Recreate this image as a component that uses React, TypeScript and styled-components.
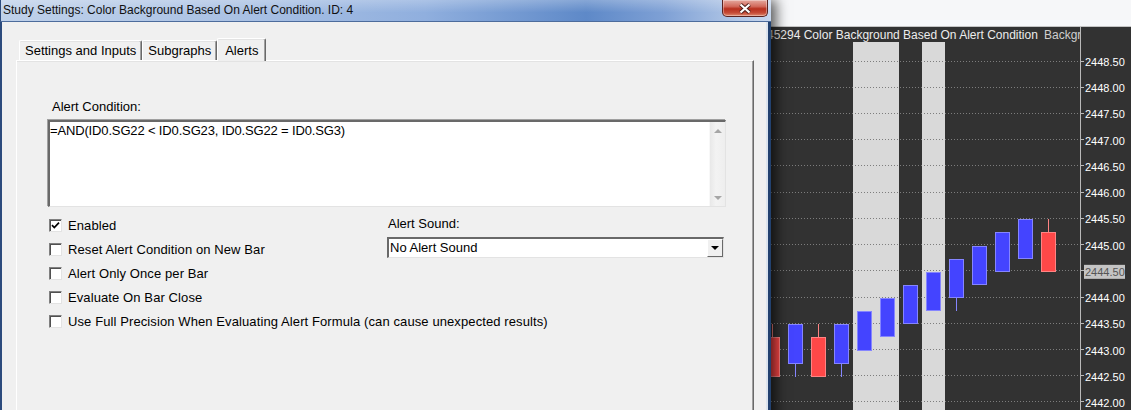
import styled, { createGlobalStyle } from "styled-components";

const GlobalStyle = createGlobalStyle`
  html, body {
    margin: 0;
    padding: 0;
    background: #323232;
  }
  body {
    font-family: "Liberation Sans", Arial, sans-serif;
  }
`;

const Desktop = styled.div`
  position: relative;
  width: 1131px;
  height: 410px;
  overflow: hidden;
`;

// chart window behind the dialog
const ChartWindow = styled.div`
  display: flex;
  flex-direction: column;
  height: 100%;
`;

const ChartTopStrip = styled.div`
  height: 26px;
  background: #f6f7f9;
  border-bottom: 1px solid #c4c4c4;
`;

const ChartCanvas = styled.svg`
  display: block;
  flex: 1;
  background: #323232;
  font-family: "Liberation Sans", Arial, sans-serif;
`;

// dialog window
const Dialog = styled.div`
  position: absolute;
  left: 0;
  top: 0;
  width: 771px;
  height: 440px;
  display: flex;
  flex-direction: column;
  box-shadow: 5px 0 12px rgba(0, 0, 0, 0.65);
`;

const TitleBar = styled.div`
  height: 21px;
  display: flex;
  align-items: flex-start;
  justify-content: space-between;
  border-bottom: 1px solid #4d6c9c;
  border-left: 1px solid #2c4b7d;
  background:
    linear-gradient(180deg, rgba(255, 255, 255, 0.25), rgba(255, 255, 255, 0) 60%),
    linear-gradient(90deg, #bfd1ea 0%, #abc2e4 30%, #90afde 55%, #5e89c8 76%, #7ea0d5 86%, #b3c8e7 96%, #c7d7ee 100%);
`;

const TitleText = styled.span`
  padding-left: 2px;
  line-height: 21px;
  font-size: 12px;
  color: #111;
  white-space: nowrap;
`;

const CloseButton = styled.div`
  width: 46px;
  height: 17px;
  margin-right: 3px;
  box-sizing: border-box;
  border: 1px solid #5a2320;
  border-top: none;
  border-radius: 0 0 5px 5px;
  display: flex;
  align-items: center;
  justify-content: center;
  background: linear-gradient(180deg, #e5a99f 0%, #d26a5c 40%, #b8301f 55%, #c54b36 80%, #e08a6f 100%);
  box-shadow: inset 0 0 0 1px rgba(255, 255, 255, 0.35);
`;

const ClientArea = styled.div`
  flex: 1;
  display: flex;
  flex-direction: column;
  background: #f0f0f0;
  border-left: 2px solid #2c4b7d;
  border-right: 3px solid #22416f;
  box-shadow: inset -2px 0 0 #dbe3ee;
  padding: 15px 14px 0 14px;
`;

const TabStrip = styled.div`
  display: flex;
  align-items: flex-end;
  height: 23px;
  padding-left: 3px;
  position: relative;
  z-index: 1;
`;

const Tab = styled.div<{ $active?: boolean }>`
  height: ${(p) => (p.$active ? "23px" : "20px")};
  margin-bottom: ${(p) => (p.$active ? "-1px" : "0")};
  padding: ${(p) => (p.$active ? "0 7px 0 7px" : "0 5px 0 5px")};
  display: flex;
  align-items: center;
  box-sizing: border-box;
  font-size: 13px;
  color: #000;
  background: #f0f0f0;
  border-top: 1px solid #ffffff;
  border-left: 1px solid #ffffff;
  border-right: 1px solid #696969;
  box-shadow: inset -1px 0 0 #a0a0a0, inset 0 1px 0 #e3e3e3;
  border-radius: 2px 2px 0 0;
  white-space: nowrap;
`;

const TabPanel = styled.div`
  flex: 1;
  box-sizing: border-box;
  border-top: 1px solid #ffffff;
  border-left: 1px solid #ffffff;
  border-right: 1px solid #696969;
  box-shadow: inset -1px 0 0 #a0a0a0, inset 0 1px 0 #e3e3e3;
  padding: 38px 0 0 31px;
  display: flex;
  flex-direction: column;
`;

const FieldLabel = styled.div<{ $indent?: number }>`
  font-size: 13px;
  line-height: 16px;
  height: 16px;
  padding-left: ${(p) => p.$indent ?? 0}px;
  color: #000;
  white-space: nowrap;
`;

const ConditionBox = styled.div`
  margin-top: 5px;
  width: 678px;
  height: 87px;
  box-sizing: border-box;
  display: flex;
  background: #fff;
  border-top: 2px solid #696969;
  border-left: 2px solid #696969;
  border-right: 1px solid #e3e3e3;
  border-bottom: 1px solid #e3e3e3;
  box-shadow: -1px -1px 0 #a0a0a0;
`;

const ConditionText = styled.div`
  flex: 1;
  padding: 1px 0 0 0;
  font-size: 13px;
  line-height: 16px;
  letter-spacing: -0.15px;
  color: #000;
  white-space: nowrap;
`;

const ScrollTrack = styled.div`
  width: 16px;
  display: flex;
  flex-direction: column;
  justify-content: space-between;
  align-items: center;
  padding: 7px 0 6px;
  box-sizing: border-box;
  background: linear-gradient(90deg, #e8e8e8, #f3f3f3 40%, #eeeeee);
  border-left: 1px solid #f8f8f8;
`;

const ScrollArrow = styled.div<{ $down?: boolean }>`
  width: 0;
  height: 0;
  border-left: 4px solid transparent;
  border-right: 4px solid transparent;
  ${(p) =>
    p.$down
      ? "border-top: 4px solid #a6a6a6;"
      : "border-bottom: 4px solid #a6a6a6;"}
`;

const OptionsGrid = styled.div`
  margin-top: 6px;
  display: grid;
  grid-template-columns: 339px 337px;
  align-items: start;
`;

const CheckList = styled.div`
  display: flex;
  flex-direction: column;
`;

const CheckRow = styled.div`
  height: 24px;
  display: flex;
  align-items: center;
  gap: 6px;
  padding-left: 1px;
  white-space: nowrap;
`;

const CheckBox = styled.div`
  flex-shrink: 0;
  width: 13px;
  height: 13px;
  box-sizing: border-box;
  background: #fff;
  border-top: 1px solid #808080;
  border-left: 1px solid #808080;
  border-right: 1px solid #e3e3e3;
  border-bottom: 1px solid #e3e3e3;
  box-shadow: inset 1px 1px 0 #505050;
  display: flex;
  align-items: center;
  justify-content: center;
`;

const CheckLabel = styled.span`
  font-size: 13px;
  letter-spacing: 0.1px;
  color: #000;
`;

const SoundColumn = styled.div`
  display: flex;
  flex-direction: column;
  padding-top: 3px;
`;

const Select = styled.div`
  margin-top: 5px;
  width: 337px;
  height: 21px;
  box-sizing: border-box;
  display: flex;
  background: #fff;
  border-top: 2px solid #696969;
  border-left: 2px solid #696969;
  border-right: 1px solid #e3e3e3;
  border-bottom: 1px solid #e3e3e3;
`;

const SelectValue = styled.div`
  flex: 1;
  padding-left: 1px;
  font-size: 13px;
  line-height: 18px;
  color: #000;
`;

const SelectButton = styled.div`
  width: 16px;
  box-sizing: border-box;
  background: #f0f0f0;
  border-top: 1px solid #fff;
  border-left: 1px solid #fff;
  border-right: 1px solid #696969;
  border-bottom: 1px solid #696969;
  display: flex;
  align-items: center;
  justify-content: center;

  &::after {
    content: "";
    border-left: 4px solid transparent;
    border-right: 4px solid transparent;
    border-top: 4px solid #000;
  }
`;

// chart data
type Candle = { open: number; close: number; high: number; low: number };

const PRICE_TOP = 2448.5;
const PX_PER_POINT = 52.46;
const yOf = (p: number) => 62 + (PRICE_TOP - p) * PX_PER_POINT;

const candles: Candle[] = [
  { open: 2443.25, close: 2442.5, high: 2443.5, low: 2442.5 },
  { open: 2442.75, close: 2443.5, high: 2443.5, low: 2442.5 },
  { open: 2443.25, close: 2442.5, high: 2443.5, low: 2442.5 },
  { open: 2442.75, close: 2443.5, high: 2443.5, low: 2442.5 },
  { open: 2443.0, close: 2443.75, high: 2443.75, low: 2443.0 },
  { open: 2443.25, close: 2444.0, high: 2444.0, low: 2443.25 },
  { open: 2443.5, close: 2444.25, high: 2444.25, low: 2443.5 },
  { open: 2443.75, close: 2444.5, high: 2444.5, low: 2443.75 },
  { open: 2444.0, close: 2444.75, high: 2444.75, low: 2443.75 },
  { open: 2444.25, close: 2445.0, high: 2445.0, low: 2444.25 },
  { open: 2444.5, close: 2445.25, high: 2445.25, low: 2444.5 },
  { open: 2444.75, close: 2445.5, high: 2445.5, low: 2444.75 },
  { open: 2445.25, close: 2444.5, high: 2445.5, low: 2444.5 },
];

const FIRST_X = 772.5;
const BAR_STEP = 23;
const shadedBars = [4, 5, 7];

const priceLevels = Array.from({ length: 14 }, (_, i) => PRICE_TOP - i * 0.5);
const LAST_PRICE = 2444.5;

function Chart() {
  return (
    <ChartCanvas viewBox="0 27 1131 383" preserveAspectRatio="none">
      <defs>
        <clipPath id="plotClip">
          <rect x="0" y="27" width="1080" height="383" />
        </clipPath>
      </defs>
      <g clipPath="url(#plotClip)">
        {shadedBars.map((i) => (
          <rect key={i} x={FIRST_X + i * BAR_STEP - 11.5} y={42} width={23} height={370} fill="#d9d9d9" />
        ))}
        {priceLevels.map((p) => {
          const y = Math.floor(yOf(p)) - 0.5;
          return <line key={p} x1={0} x2={1080} y1={y} y2={y} stroke="#7d7d7d" strokeDasharray="1 2" />;
        })}
        {candles.map((c, i) => {
          const cx = FIRST_X + i * BAR_STEP;
          const up = c.close >= c.open;
          const fill = up ? "#4444ff" : "#ff4848";
          const edge = up ? "#8585ff" : "#ff8484";
          const top = Math.round(yOf(Math.max(c.open, c.close)));
          const bot = Math.round(yOf(Math.min(c.open, c.close)));
          const hi = Math.round(yOf(c.high));
          const lo = Math.round(yOf(c.low));
          return (
            <g key={i}>
              {hi < top && <line x1={cx} x2={cx} y1={hi} y2={top} stroke={edge} />}
              {lo > bot && <line x1={cx} x2={cx} y1={bot} y2={lo} stroke={edge} />}
              <rect x={cx - 7} y={top + 0.5} width={14} height={bot - top - 1} fill={fill} stroke={edge} />
            </g>
          );
        })}
        <text x={767} y={35} fontSize="12" fill="#ececec" dominantBaseline="central">
          45294 Color Background Based On Alert Condition
        </text>
        <text x={1044} y={35} fontSize="12" fill="#cfcfcf" dominantBaseline="central">
          Background
        </text>
      </g>
      <line x1={1080.5} x2={1080.5} y1={27} y2={410} stroke="#b9b9b9" />
      {priceLevels.map((p) => {
        const y = yOf(p);
        const last = p === LAST_PRICE;
        return (
          <g key={p}>
            <line x1={1081} x2={1084} y1={Math.floor(y) - 0.5} y2={Math.floor(y) - 0.5} stroke="#b9b9b9" />
            {last && <rect x={1084} y={y - 7} width={41} height={14} fill="#c4c4c4" />}
            <text x={1085} y={y} fontSize="11" fill={last ? "#555555" : "#ffffff"} dominantBaseline="central">
              {p.toFixed(2)}
            </text>
          </g>
        );
      })}
    </ChartCanvas>
  );
}

const options = [
  { label: "Enabled", checked: true },
  { label: "Reset Alert Condition on New Bar", checked: false },
  { label: "Alert Only Once per Bar", checked: false },
  { label: "Evaluate On Bar Close", checked: false },
  { label: "Use Full Precision When Evaluating Alert Formula (can cause unexpected results)", checked: false },
];

export default function App() {
  return (
    <Desktop>
      <GlobalStyle />
      <ChartWindow>
        <ChartTopStrip />
        <Chart />
      </ChartWindow>

      <Dialog>
        <TitleBar>
          <TitleText>Study Settings: Color Background Based On Alert Condition. ID: 4</TitleText>
          <CloseButton>
            <svg width="14" height="11" viewBox="0 0 14 11">
              <path d="M2.5 1.5 L11.5 9.5 M11.5 1.5 L2.5 9.5" stroke="#4a1e1a" strokeWidth="4" />
              <path d="M2.5 1.5 L11.5 9.5 M11.5 1.5 L2.5 9.5" stroke="#ffffff" strokeWidth="2.2" />
            </svg>
          </CloseButton>
        </TitleBar>
        <ClientArea>
          <TabStrip>
            <Tab>Settings and Inputs</Tab>
            <Tab>Subgraphs</Tab>
            <Tab $active>Alerts</Tab>
          </TabStrip>
          <TabPanel>
            <FieldLabel $indent={4}>Alert Condition:</FieldLabel>
            <ConditionBox>
              <ConditionText>=AND(ID0.SG22 &lt; ID0.SG23, ID0.SG22 = ID0.SG3)</ConditionText>
              <ScrollTrack>
                <ScrollArrow />
                <ScrollArrow $down />
              </ScrollTrack>
            </ConditionBox>
            <OptionsGrid>
              <CheckList>
                {options.map((o) => (
                  <CheckRow key={o.label}>
                    <CheckBox>
                      {o.checked && (
                        <svg width="9" height="9" viewBox="0 0 9 9">
                          <path d="M1 4.2 L3.3 6.6 L8 1.6" stroke="#000" strokeWidth="1.7" fill="none" />
                        </svg>
                      )}
                    </CheckBox>
                    <CheckLabel>{o.label}</CheckLabel>
                  </CheckRow>
                ))}
              </CheckList>
              <SoundColumn>
                <FieldLabel $indent={1}>Alert Sound:</FieldLabel>
                <Select>
                  <SelectValue>No Alert Sound</SelectValue>
                  <SelectButton />
                </Select>
              </SoundColumn>
            </OptionsGrid>
          </TabPanel>
        </ClientArea>
      </Dialog>
    </Desktop>
  );
}
